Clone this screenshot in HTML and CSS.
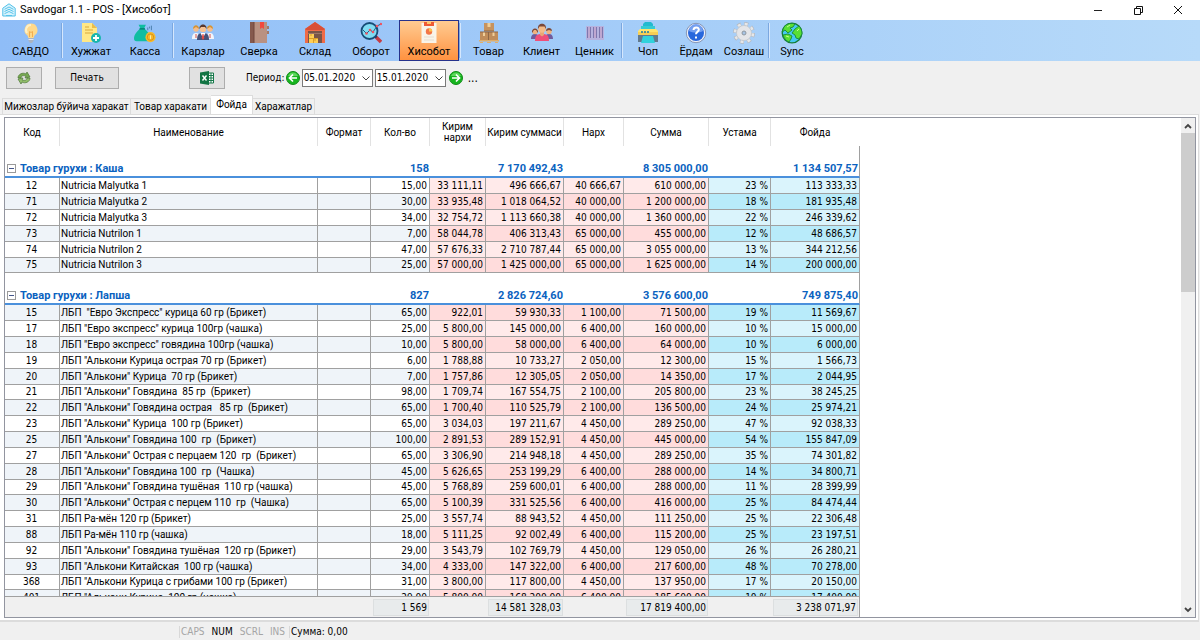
FILE: index.html
```html
<!DOCTYPE html>
<html lang="uz">
<head>
<meta charset="utf-8">
<title>Savdogar 1.1 - POS - [Хисобот]</title>
<link rel="stylesheet" href="styles.css">
</head>
<body>
<header class="titlebar">
  <svg class="app-icon" viewBox="0 0 14 14"><path d="M.8 5.2 7 .8l6.200 4.400V13H.8z" fill="#d9f4fd" stroke="#4fbfe8"/><path d="M2.500 6.300 7 4l4.500 2.300M2.500 8.500 7 6.300l4.500 2.200M2.500 10.700 7 8.500l4.500 2.200M4 12.500h6" fill="none" stroke="#5ac4ea"/></svg>
  <h1 class="title">Savdogar 1.1 - POS - [Хисобот]</h1>
  <div class="window-buttons">
    <button class="win" aria-label="Minimize"><svg viewBox="0 0 12 12"><path d="M2 6.500h8" stroke="#222"/></svg></button>
    <button class="win" aria-label="Restore"><svg viewBox="0 0 12 12"><path d="M2.500 4.500h6v6h-6zM4.500 4V2.500h6v6H9" fill="none" stroke="#111"/></svg></button>
    <button class="win" aria-label="Close"><svg viewBox="0 0 12 12"><path d="m2 2 8 8M10 2l-8 8" stroke="#111"/></svg></button>
  </div>
</header>

<nav class="toolbar">
  <div class="group first">
    <button class="tool"><svg viewBox="0 0 22 22"><path d="M11 1.500a6.500 6.500 0 0 0-4 11.600c1 .8 1 1.900 1.300 2.900h5.400c.3-1 .3-2.100 1.300-2.900a6.500 6.500 0 0 0-4-11.600z" fill="#ffd98a"/><path d="M11 3a5 5 0 0 0-4 8" stroke="#fff0c4" stroke-width="2" fill="none"/><path d="M9.500 15V9.500l1.500 1 1.500-1V15" stroke="#f3ae4f" fill="none"/><path d="M8.500 16h5v3l-1.500 2h-2l-1.500-2z" fill="#aab4c2"/><path d="M8.500 17.500h5" stroke="#e4e9ef"/></svg>САВДО</button>
  </div>
  <div class="group docs">
    <button class="tool"><svg viewBox="0 0 22 22"><path d="M2 1h10l5 5v14H2z" fill="#ffe887"/><path d="M12 1v5h5z" fill="#e9bd4c"/><path d="M5 8h8M5 11h8M5 5h4" stroke="#d8a93d"/><circle cx="16" cy="16" r="5" fill="#18b5ad"/><path d="M16 13v6M13 16h6" stroke="#fff" stroke-width="1.800"/></svg>Хужжат</button>
    <button class="tool"><svg viewBox="0 0 24 22"><path d="M5 2h8l-2 4c4 3 7 7 7 11 0 2-1 3-3 3H3c-2 0-3-1-3-3 0-4 3-8 7-11z" fill="#10bda1"/><path d="M6 6.500h6" stroke="#067c70" stroke-width="1.500"/><path d="M15 8v-3M19 8V3M17 6V4" stroke="#477caa"/><circle cx="18" cy="15.500" r="5.500" fill="#f7ba2b"/><circle cx="18" cy="15.500" r="3.500" fill="none" stroke="#d98c16"/><path d="M18 13.500v4" stroke="#fff1b3"/></svg>Касса</button>
  </div>
  <div class="group reports">
    <button class="tool"><svg viewBox="0 0 22 22"><path d="M0 17c0-5 2-6 4-6s4 1 4 6zM14 17c0-5 2-6 4-6s4 1 4 6z" fill="#f2f5fb"/><circle cx="4" cy="7" r="2.700" fill="#f5bd8c"/><circle cx="18" cy="7" r="2.700" fill="#f5bd8c"/><path d="M1 7c0-5 6-5 6 0L4 5zM15 7c0-5 6-5 6 0l-3-2z" fill="#d59435"/><path d="M5 18c0-6 2-7 6-7s6 1 6 7z" fill="#44527a"/><path d="m8.500 11 2.500 5 2.500-5z" fill="#fff"/><path d="M10.500 12h1l.8 4-1.300 2-1.300-2z" fill="#df4c45"/><circle cx="11" cy="7" r="3.200" fill="#f6c294"/><path d="M7.500 7c-.8-6 7.800-6 7 0L13 5H9z" fill="#59382f"/><path d="M3.500 12h1v4h-1zM17.500 12h1v4h-1z" fill="#d7534a"/></svg>Карзлар</button>
    <button class="tool"><svg viewBox="0 0 22 22"><path d="M2 0h17v21H2z" fill="#b99181"/><path d="M2 0h4v21H2z" fill="#85594d"/><path d="M19 4h2v3h-2zM19 9h2v3h-2z" fill="#a17969"/><path d="M12 0h4v7l-2-1.500L12 7z" fill="#f0493f"/><path d="M6 0v21" stroke="#6e473d"/></svg>Сверка</button>
    <button class="tool"><svg viewBox="0 0 22 22"><path d="M1 7 11 0l10 7v14H1z" fill="#ef6b47"/><path d="M1 7 11 0l10 7-1.500 1H2.500z" fill="#d94f37"/><path d="M4 9h14v12H4z" fill="#795548"/><path d="M4 11.500h14" stroke="#9c7669"/><path d="M5 12h5v4h4v5H5z" fill="#ffcd54"/><path d="M5 16.500h9M9.500 17v4M7 12v2M11 17v2" stroke="#d99e28"/></svg>Склад</button>
    <button class="tool"><svg viewBox="0 0 22 22"><path d="m15 14 6 6" stroke="#c53c43" stroke-width="3.500"/><path d="m14 13 2.500 2.500" stroke="#143d61" stroke-width="2"/><circle cx="9.500" cy="9" r="8" fill="#80dcf2" stroke="#174d77" stroke-width="1.800"/><path d="m3 8 3.500 3.500L10 8l3 2 4-6 4-2" fill="none" stroke="#245a83"/><g fill="#ed5360"><circle cx="6.500" cy="11.500" r="1.300"/><circle cx="10" cy="8" r="1.300"/><circle cx="13" cy="10" r="1.300"/><circle cx="17" cy="4" r="1.300"/><circle cx="21" cy="2" r="1.200"/></g></svg>Оборот</button>
  </div>
  <div class="group current">
    <button class="tool active" aria-current="page"><svg viewBox="0 0 22 22"><path d="M3.500 1h15v20h-15z" fill="#f9f4e9"/><path d="M6 0h10v4H6z" fill="#f05a35"/><path d="M9 0h4v2H9z" fill="#ffc76a"/><circle cx="11" cy="9.500" r="3.200" fill="#f37647"/><path d="M11 9.500V6.300a3.200 3.200 0 0 1 3.200 3.200z" fill="#ffc44f"/><path d="M6 15h10M6 18h10" stroke="#e6ddcf"/></svg>Хисобот</button>
  </div>
  <div class="group goods">
    <button class="tool"><svg viewBox="0 0 22 22"><path d="M6 1h10v8H6z" fill="#c6935f"/><path d="M2 10h8v8H2zM11 10h9v8h-9z" fill="#c08d5a"/><path d="M9.500 1h3v4h-3zM5 10h2v4H5zM14.500 10h2v4h-2z" fill="#f0cf99"/><path d="M6 9h10M10.500 10v8M2 10h18" stroke="#8f6745"/><path d="M1 18h20v1.500H1zM2 20h3v1H2zM9 20h4v1H9zM17 20h3v1h-3z" fill="#dfae6a"/></svg>Товар</button>
    <button class="tool"><svg viewBox="0 0 22 22"><path d="M0 17c0-4 2-5 4-5s4 1 4 5zM14 17c0-4 2-5 4-5s4 1 4 5z" fill="#705b9d"/><circle cx="4" cy="9.500" r="2.700" fill="#f1b27e"/><circle cx="18" cy="9.500" r="2.700" fill="#f1b27e"/><path d="M1 11c-1-6 7-6 6 0L5 8H3zM15 9c0-4 6-4 6 0l-3-1z" fill="#79483a"/><path d="M4 19c0-6 2-7 7-7s7 1 7 7z" fill="#ef4f78"/><path d="M9 10h4v3l-2 1.500L9 13z" fill="#e9a675"/><circle cx="11" cy="7" r="3.800" fill="#f4bb88"/><path d="M7 7C6 0 16 0 15 7l-1.500-2.500h-5z" fill="#79483a"/></svg>Клиент</button>
    <button class="tool"><svg viewBox="0 0 22 22"><path d="M2 4h18v14H2z" fill="#b6b3df"/><path d="M3.500 5v11M6.500 5v11M9.500 5v11M12.500 5v11M15.500 5v11M18.500 5v11" stroke="#7e78ae"/><path d="M5 5v11M11 5v11M17 5v11" stroke="#c79cc2"/></svg>Ценник</button>
  </div>
  <div class="group service">
    <button class="tool"><svg viewBox="0 0 22 22"><path d="M6 2 8 0h6l2 2v6H6z" fill="#22bad0"/><path d="M4 4h14v4H4z" fill="#36cbd2"/><path d="m1 9 2-2h16l2 2v3H1z" fill="#ffe46c"/><path d="M1 11h20v9H1z" fill="#627a8d"/><path d="M1 10h20v3H1z" fill="#f6ce55"/><path d="M4 10h2M7 10h2M10 10h2" stroke="#167caa" stroke-width="1.500"/><path d="M6 14h10l2 7H4z" fill="#30d2dc"/></svg>Чоп</button>
    <button class="tool"><svg viewBox="0 0 22 22"><circle cx="11" cy="11" r="9.700" fill="#eef2fa" stroke="#8695b4"/><circle cx="11" cy="11" r="8" fill="#2867dc"/><path d="M4 9a7 7 0 0 1 14 0c-4 2-10 2-14 0z" fill="#739ff0"/><path d="M8.500 8c.3-3.500 5.500-3.300 5.300-.2-.2 2-2.800 2-2.800 4.500M11 14.500v2" fill="none" stroke="#fff" stroke-width="2"/></svg>Ёрдам</button>
    <button class="tool"><svg viewBox="0 0 22 22"><circle cx="11" cy="11" r="9" fill="none" stroke="#b3b7bd" stroke-width="4" stroke-dasharray="3.800 3.270"/><circle cx="11" cy="11" r="9" fill="none" stroke="#e6e7e9" stroke-width="2.600" stroke-dasharray="3 4.070" stroke-dashoffset="-.4"/><circle cx="11" cy="11" r="7.500" fill="#e4e5e8" stroke="#c3c7cc" stroke-width=".7"/><circle cx="11" cy="11" r="2" fill="#a7c3e3" stroke="#8f979f"/></svg>Созлаш</button>
  </div>
  <div class="group sync">
    <button class="tool"><svg viewBox="0 0 22 22"><circle cx="11" cy="11" r="9.800" fill="#45c9f1" stroke="#147c34" stroke-width="1.300"/><path d="M3 5c3-4 8-4 11-3l-2 3-3 1 2 2-4 3-3-3-3 2zM2 13l5-1 4 2-1 3-2 3c-3-1-5-4-6-7zM14 7l4-3c2 2 3 5 3 8l-3 5-3-1-1-3-3-2z" fill="#59df35" stroke="#17893b" stroke-width=".9"/><path d="m6 5 3-2M16 9l2-2M5 14l3 1" stroke="#c9ff88"/></svg>Sync</button>
  </div>
</nav>

<div class="filters">
  <button class="push square" aria-label="Обновить"><svg viewBox="0 0 14 14"><path d="M1 7c0-4 5-6 8-4l1-2 3 5-5 1 1-2C6 4 4 5 4 7z" fill="#76a850" stroke="#4d7738" stroke-width=".7"/><path d="M13 7c0 4-5 6-8 4l-1 2-3-5 5-1-1 2c3 1 5 0 5-2z" fill="#91be69" stroke="#4d7738" stroke-width=".7"/></svg></button>
  <button class="push print">Печать</button>
  <button class="push square excel" aria-label="Excel"><svg viewBox="0 0 14 14"><path d="M8 2h5.500v10H8z" fill="#fff" stroke="#16784a"/><path d="M9 4.500h4M9 7h4M9 9.500h4M11 2v10" stroke="#16784a"/><path d="m0 1.500 9-1.500v14l-9-1.500z" fill="#127443"/><path d="m2.500 4.500 4 5M6.500 4.500l-4 5" stroke="#fff" stroke-width="1.400"/></svg></button>
  <label class="period" for="from">Период:</label>
  <button class="step" aria-label="Назад"><svg viewBox="0 0 14 14"><circle cx="7" cy="7" r="6.500" fill="#16b51e" stroke="#118a18"/><path d="M2 5a5.300 5.300 0 0 1 10 0z" fill="#5bd65a"/><path d="M11 7H4M7 3.500 3.500 7 7 10.500" fill="none" stroke="#fff" stroke-width="1.700"/></svg></button>
  <div class="date"><input id="from" value="05.01.2020"><button aria-label="Календарь"><svg viewBox="0 0 10 10"><path d="m1.500 3.500 3.500 3.500 3.500-3.500" fill="none" stroke="#444"/></svg></button></div>
  <div class="date"><input id="to" aria-label="Период до" value="15.01.2020"><button aria-label="Календарь"><svg viewBox="0 0 10 10"><path d="m1.500 3.500 3.500 3.500 3.500-3.500" fill="none" stroke="#444"/></svg></button></div>
  <button class="step" aria-label="Вперёд"><svg viewBox="0 0 14 14"><circle cx="7" cy="7" r="6.500" fill="#16b51e" stroke="#118a18"/><path d="M2 5a5.300 5.300 0 0 1 10 0z" fill="#5bd65a"/><path d="M3 7h7M7 3.500 10.500 7 7 10.500" fill="none" stroke="#fff" stroke-width="1.700"/></svg></button>
  <button class="more">...</button>
</div>

<div class="tabs" role="tablist">
  <button class="tab wide" role="tab">Мижозлар бўйича харакат</button>
  <button class="tab mid" role="tab">Товар харакати</button>
  <button class="tab selected" role="tab" aria-selected="true">Фойда</button>
  <button class="tab last" role="tab">Харажатлар</button>
</div>

<main class="page">
  <div class="frame">
    <div class="report">
      <div class="viewport">
        <table class="grid">
          <colgroup><col class="c-code"><col class="c-name"><col class="c-format"><col class="c-qty"><col class="c-cost"><col class="c-costsum"><col class="c-price"><col class="c-sum"><col class="c-margin"><col class="c-profit"></colgroup>
          <thead><tr><th>Код<th>Наименование<th>Формат<th>Кол-во<th>Кирим<br>нархи<th>Кирим суммаси<th>Нарх<th>Сумма<th>Устама<th>Фойда</tr></thead>
          <tbody class="head"><tr><td colspan="3"><button class="fold" aria-label="Свернуть"></button>Товар гурухи : Каша<td>158<td><td>7 170 492,43<td><td>8 305 000,00<td><td>1 134 507,57</tr></tbody>
          <tbody class="rows">
            <tr><td>12<td>Nutricia Malyutka 1<td><td>15,00<td>33 111,11<td>496 666,67<td>40 666,67<td>610 000,00<td>23 %<td>113 333,33</tr>
            <tr><td>71<td>Nutricia Malyutka 2<td><td>30,00<td>33 935,48<td>1 018 064,52<td>40 000,00<td>1 200 000,00<td>18 %<td>181 935,48</tr>
            <tr><td>72<td>Nutricia Malyutka 3<td><td>34,00<td>32 754,72<td>1 113 660,38<td>40 000,00<td>1 360 000,00<td>22 %<td>246 339,62</tr>
            <tr><td>73<td>Nutricia Nutrilon 1<td><td>7,00<td>58 044,78<td>406 313,43<td>65 000,00<td>455 000,00<td>12 %<td>48 686,57</tr>
            <tr><td>74<td>Nutricia Nutrilon 2<td><td>47,00<td>57 676,33<td>2 710 787,44<td>65 000,00<td>3 055 000,00<td>13 %<td>344 212,56</tr>
            <tr><td>75<td>Nutricia Nutrilon 3<td><td>25,00<td>57 000,00<td>1 425 000,00<td>65 000,00<td>1 625 000,00<td>14 %<td>200 000,00</tr>
          </tbody>
          <tbody class="head"><tr><td colspan="3"><button class="fold" aria-label="Свернуть"></button>Товар гурухи : Лапша<td>827<td><td>2 826 724,60<td><td>3 576 600,00<td><td>749 875,40</tr></tbody>
          <tbody class="rows shifted">
            <tr><td>15<td>ЛБП  "Евро Экспресс" курица 60 гр (Брикет)<td><td>65,00<td>922,01<td>59 930,33<td>1 100,00<td>71 500,00<td>19 %<td>11 569,67</tr>
            <tr><td>17<td>ЛБП "Евро экспресс" курица 100гр (чашка)<td><td>25,00<td>5 800,00<td>145 000,00<td>6 400,00<td>160 000,00<td>10 %<td>15 000,00</tr>
            <tr><td>18<td>ЛБП "Евро экспресс" говядина 100гр (чашка)<td><td>10,00<td>5 800,00<td>58 000,00<td>6 400,00<td>64 000,00<td>10 %<td>6 000,00</tr>
            <tr><td>19<td>ЛБП "Алькони Курица острая 70 гр (Брикет)<td><td>6,00<td>1 788,88<td>10 733,27<td>2 050,00<td>12 300,00<td>15 %<td>1 566,73</tr>
            <tr><td>20<td>ЛБП "Алькони" Курица  70 гр (Брикет)<td><td>7,00<td>1 757,86<td>12 305,05<td>2 050,00<td>14 350,00<td>17 %<td>2 044,95</tr>
            <tr><td>21<td>ЛБП "Алькони" Говядина  85 гр  (Брикет)<td><td>98,00<td>1 709,74<td>167 554,75<td>2 100,00<td>205 800,00<td>23 %<td>38 245,25</tr>
            <tr><td>22<td>ЛБП "Алькони" Говядина острая   85 гр  (Брикет)<td><td>65,00<td>1 700,40<td>110 525,79<td>2 100,00<td>136 500,00<td>24 %<td>25 974,21</tr>
            <tr><td>23<td>ЛБП "Алькони" Курица  100 гр (Брикет)<td><td>65,00<td>3 034,03<td>197 211,67<td>4 450,00<td>289 250,00<td>47 %<td>92 038,33</tr>
            <tr><td>25<td>ЛБП "Алькони" Говядина 100  гр  (Брикет)<td><td>100,00<td>2 891,53<td>289 152,91<td>4 450,00<td>445 000,00<td>54 %<td>155 847,09</tr>
            <tr><td>27<td>ЛБП "Алькони" Острая с перцаем 120  гр  (Брикет)<td><td>65,00<td>3 306,90<td>214 948,18<td>4 450,00<td>289 250,00<td>35 %<td>74 301,82</tr>
            <tr><td>28<td>ЛБП "Алькони" Говядина 100  гр  (Чашка)<td><td>45,00<td>5 626,65<td>253 199,29<td>6 400,00<td>288 000,00<td>14 %<td>34 800,71</tr>
            <tr><td>29<td>ЛБП "Алькони" Говядина тушёная  110 гр (чашка)<td><td>45,00<td>5 768,89<td>259 600,01<td>6 400,00<td>288 000,00<td>11 %<td>28 399,99</tr>
            <tr><td>30<td>ЛБП "Алькони" Острая с перцем 110  гр  (Чашка)<td><td>65,00<td>5 100,39<td>331 525,56<td>6 400,00<td>416 000,00<td>25 %<td>84 474,44</tr>
            <tr><td>31<td>ЛБП Ра-мён 120 гр (Брикет)<td><td>25,00<td>3 557,74<td>88 943,52<td>4 450,00<td>111 250,00<td>25 %<td>22 306,48</tr>
            <tr><td>88<td>ЛБП Ра-мён 110 гр (чашка)<td><td>18,00<td>5 111,25<td>92 002,49<td>6 400,00<td>115 200,00<td>25 %<td>23 197,51</tr>
            <tr><td>92<td>ЛБП "Алькони" Говядина тушёная  120 гр (Брикет)<td><td>29,00<td>3 543,79<td>102 769,79<td>4 450,00<td>129 050,00<td>26 %<td>26 280,21</tr>
            <tr><td>93<td>ЛБП "Алькони Китайская  100 гр (чашка)<td><td>34,00<td>4 333,00<td>147 322,00<td>6 400,00<td>217 600,00<td>48 %<td>70 278,00</tr>
            <tr><td>368<td>ЛБП "Алькони Курица с грибами 100 гр (Брикет)<td><td>31,00<td>3 800,00<td>117 800,00<td>4 450,00<td>137 950,00<td>17 %<td>20 150,00</tr>
            <tr><td>401<td>ЛБП "Алькони Курица  100 гр (чашка)<td><td>29,00<td>5 800,00<td>168 200,00<td>6 400,00<td>185 600,00<td>10 %<td>17 400,00</tr>
          </tbody>
        </table>
      </div>
      <table class="totals">
        <colgroup><col class="c-code"><col class="c-name"><col class="c-format"><col class="c-qty"><col class="c-cost"><col class="c-costsum"><col class="c-price"><col class="c-sum"><col class="c-margin"><col class="c-profit"></colgroup>
        <tbody><tr><td><td><td><td><output>1 569</output><td><td><output>14 581 328,03</output><td><td><output>17 819 400,00</output><td><td><output>3 238 071,97</output></tr></tbody>
      </table>
    </div>
    <div class="scrollbar">
      <button aria-label="Вверх"><svg viewBox="0 0 10 10"><path d="M2 7 5 4l3 3" fill="none" stroke="#444" stroke-width="1.800"/></svg></button>
      <div class="track"><div class="thumb"></div></div>
      <button aria-label="Вниз"><svg viewBox="0 0 10 10"><path d="m2 3 3 3 3-3" fill="none" stroke="#444" stroke-width="1.800"/></svg></button>
    </div>
  </div>
</main>

<footer class="status">
  <div class="keys"><span>CAPS</span><span class="on">NUM</span><span>SCRL</span><span>INS</span></div>
  <div class="amount">Сумма: 0,00</div>
</footer>
</body>
</html>
```

FILE: styles.css
```css
* { box-sizing: border-box; }

body {
  display: flex;
  flex-direction: column;
  height: 100vh;
  margin: 0;
  overflow: hidden;
  background: #f0f0f0;
  color: #000;
  font: 10px/12px "DejaVu Sans Condensed", "DejaVu Sans", sans-serif;
}

button, input {
  margin: 0;
  padding: 0;
  border: 0;
  background: none;
  color: inherit;
  font: inherit;
}

svg { display: block; }

/* Title bar */
.titlebar {
  display: flex;
  align-items: center;
  flex: none;
  gap: 4px;
  height: 20px;
  padding-left: 2px;
  background: #fff;
}
.app-icon { width: 14px; height: 14px; }
.title {
  flex: 1;
  margin: 0;
  font: 11px/20px Roboto, "Noto Sans", sans-serif;
}
.window-buttons { display: flex; padding-right: 2px; }
.win { display: grid; place-items: center; width: 40px; height: 18px; }
.win svg { width: 12px; height: 12px; }

/* Toolbar */
.toolbar {
  display: flex;
  flex: none;
  height: 41px;
  background: linear-gradient(90deg, #8fbdf7, #b7daf9);
}
.group { display: flex; }
.group + .group { padding-left: 3px; }
.group + .group:not(.current) {
  background: linear-gradient(90deg, #7ba7df 1px, #d5e7fd 1px, #d5e7fd 2px, transparent 2px) 0 3px / 100% 35px no-repeat;
}
.group.current { padding-left: 0; }
.tool {
  display: flex;
  flex-direction: column;
  align-items: center;
  width: 54px;
  padding-top: 2px;
  font: 11px/16px Roboto, "Noto Sans", sans-serif;
}
.tool svg { width: 22px; height: 22px; }
.first .tool { width: 61px; }
.reports .tool { width: 56px; }
.current .tool { width: 60px; }
.goods .tool { width: 53px; }
.service .tool { width: 48px; }
.sync .tool { width: 42px; }
.tool.active {
  padding-top: 1px;
  border: 1px solid #26328c;
  background: linear-gradient(#ffcb92, #ff9240);
}

/* Filter row */
.filters {
  display: flex;
  align-items: center;
  flex: none;
  height: 34px;
  padding-left: 6px;
}
.push {
  display: grid;
  place-items: center;
  height: 22px;
  border: 1px solid #adadad;
  background: #e1e1e1;
}
.square { width: 36px; }
.square svg { width: 14px; height: 14px; }
.print { width: 64px; margin-left: 13px; }
.excel { margin-left: 70px; }
.period { margin: 0 1px 0 21px; }
.step svg { width: 14px; height: 14px; }
.date {
  display: flex;
  align-items: center;
  width: 71px;
  height: 18px;
  margin-left: 2px;
  border: 1px solid #7a7a7a;
  background: #fff;
}
.date input { flex: 1; min-width: 0; padding-left: 1px; }
.date button { padding: 0 1px; }
.date svg { width: 10px; height: 10px; }
.date + .step { margin-left: 3px; }
.more { margin-left: 5px; font-size: 12px; }

/* Tabs */
.tabs {
  display: flex;
  align-items: flex-end;
  flex: none;
  height: 19px;
  padding-left: 2px;
}
.tab {
  height: 16px;
  border: 1px solid #dcdcdc;
  border-bottom: 0;
  border-left-width: 0;
  font: 10px/12px Roboto, sans-serif;
  white-space: nowrap;
}
.wide { width: 129px; border-left-width: 1px; }
.mid { width: 80px; }
.selected { width: 42px; height: 19px; background: #fff; }
.last { width: 62px; }

/* Report page */
.page {
  display: flex;
  flex: 1;
  min-height: 0;
  padding: 2px 2px 2px 4px;
  border: 1px solid #dcdcdc;
  border-width: 1px 1px 2px 0;
  margin-right: 1px;
  background: #fff;
}
.frame {
  display: flex;
  justify-content: space-between;
  flex: 1;
  border: 1px solid #9295a0;
}
.report { display: flex; flex-direction: column; min-height: 0; }
.viewport { flex: 1; min-height: 0; overflow: hidden; }

.grid, .totals {
  width: 855px;
  table-layout: fixed;
  border-spacing: 0;
}
.c-code { width: 55px; }
.c-name { width: 258px; }
.c-format { width: 53px; }
.c-qty { width: 59px; }
.c-cost { width: 56px; }
.c-costsum { width: 78px; }
.c-price { width: 60px; }
.c-sum { width: 85px; }
.c-margin { width: 62px; }
.c-profit { width: 89px; }

th {
  height: 28px;
  padding: 0 1px;
  border-right: 1px solid #e2e2e2;
  font: 10px/11px Roboto, sans-serif;
  white-space: nowrap;
}
th:last-child { border-right-color: #fff; }

.grid td {
  padding: 0 2px 0 1px;
  border-right: 1px solid #a0a0a0;
  text-align: right;
  white-space: pre;
  overflow: hidden;
}
.grid .head td {
  height: 32px;
  padding-right: 1px;
  border-right: 0;
  border-bottom: 2px solid #4a90dc;
  color: #0a62c0;
  font: bold 11px/14px Roboto, sans-serif;
  vertical-align: bottom;
}
.grid .head td:first-child { text-align: left; padding-left: 2px; }
.grid .head td:last-child { border-right: 1px solid #a0a0a0; }
.fold {
  display: inline-block;
  width: 9px;
  height: 9px;
  margin-right: 4px;
  border: 1px solid #9a9a9a;
  background: linear-gradient(#44568a, #44568a) center / 5px 1px no-repeat #fff;
}

.rows td {
  height: 16px;
  border-bottom: 1px solid #a0a0a0;
  line-height: 15px;
}
.rows tr:nth-child(6n) td { height: 15px; line-height: 14px; }
.grid .rows td:nth-child(1) { text-align: center; }
.grid .rows td:nth-child(2) {
  font-family: Roboto, sans-serif;
  text-align: left;
}
.rows tr td:nth-child(n+5) { background: #ffeaea; }
.rows tr td:nth-child(n+9) { background: #daf4fc; }
.rows:not(.shifted) tr:nth-child(even) td,
.shifted tr:nth-child(odd) td { background: #eff4f9; }
.rows:not(.shifted) tr:nth-child(even) td:nth-child(n+5),
.shifted tr:nth-child(odd) td:nth-child(n+5) { background: #ffdcdc; }
.rows:not(.shifted) tr:nth-child(even) td:nth-child(n+9),
.shifted tr:nth-child(odd) td:nth-child(n+9) { background: #b8ebfa; }

.totals {
  flex: none;
  border-top: 1px solid #a0a0a0;
  background: #f0f0f0;
}
.totals td { height: 20px; padding: 1px 1px 1px 2px; }
.totals td:last-child { border-right: 1px solid #a0a0a0; }
.totals output {
  display: block;
  padding-right: 1px;
  border: 1px solid #dcdfe0;
  background: #e8ebec;
  line-height: 15px;
  text-align: right;
}

/* Scrollbar */
.scrollbar {
  display: flex;
  flex-direction: column;
  width: 14px;
  background: #f0f0f0;
}
.scrollbar button { display: grid; place-items: center; height: 15px; }
.scrollbar svg { width: 10px; height: 10px; }
.track { flex: 1; }
.thumb { height: 34%; background: #cdcdcd; }

/* Status bar */
.status {
  display: flex;
  align-items: center;
  flex: none;
  height: 18px;
  padding: 2px 0 0 179px;
}
.keys {
  display: flex;
  gap: 7px;
  padding: 0 4px 0 1px;
  border: 1px solid #d8d8d8;
  border-width: 0 1px;
  color: #a5a5a5;
}
.on { color: #000; }
.amount { padding-left: 1px; }
```
